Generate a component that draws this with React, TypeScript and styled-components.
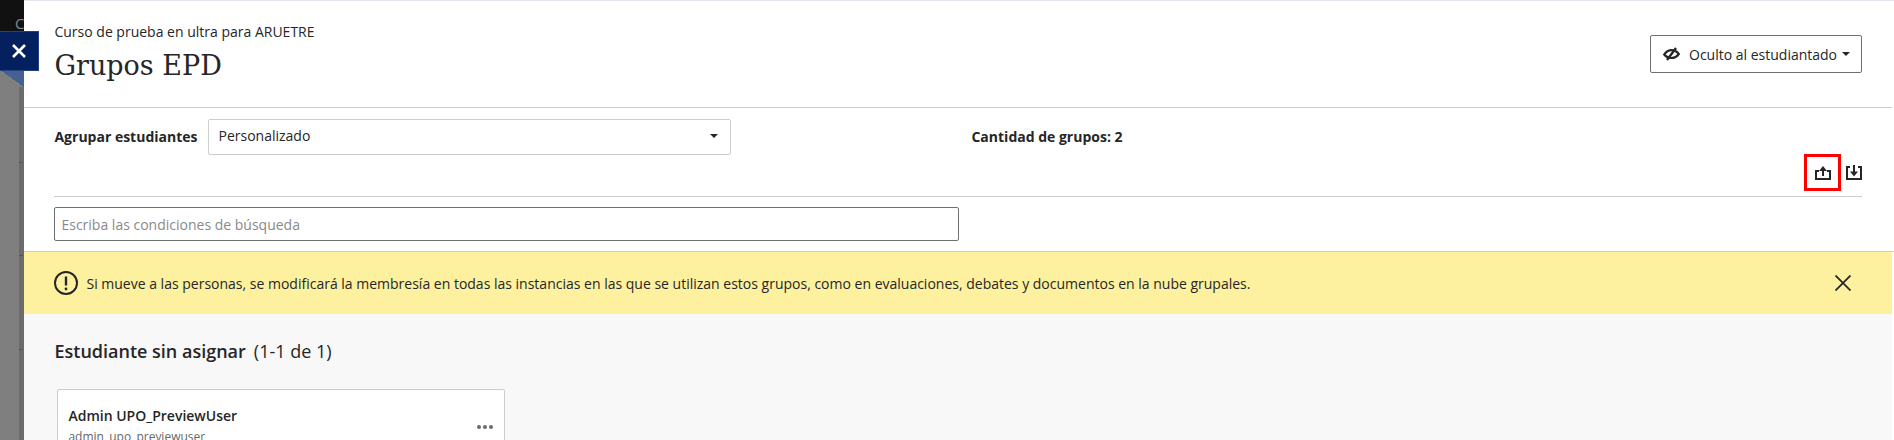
import React from "react";
import styled, { createGlobalStyle } from "styled-components";

const Global = createGlobalStyle`
  html, body { margin: 0; padding: 0; height: 440px; overflow: hidden; background: #fff; }
  #root { height: 440px; }
  * { box-sizing: border-box; }
`;
const sans = `"Open Sans", "Noto Sans", sans-serif`;

const Page = styled.div`
  display: flex;
  width: 1894px;
  height: 440px;
  overflow: hidden;
  font-family: ${sans};
  color: #262626;
`;
const Rail = styled.div`
  position: relative;
  flex: 0 0 23px;
  display: flex;
  flex-direction: column;
  background: #7f7f7f;
  border-right: 5px solid #6b6b6b;
`;
const RailTop = styled.div`
  flex: 0 0 31px;
  margin-right: -5px;
  background: #111;
  overflow: hidden;
  color: #7d8b90;
  font-size: 15px;
  line-height: 46px;
  padding-left: 15px;
`;
const Corner = styled.div`
  flex: 0 0 39px;
`;
const Fold = styled.div`
  flex: 0 0 17px;
  margin-right: -5px;
  background: linear-gradient(to top right, #7f7f7f 50%, #46608f 50%);
`;
const Tick = styled.i<{ $top: number }>`
  position: absolute;
  left: 19px;
  top: ${(p) => p.$top}px;
  width: 4px;
  height: 1px;
  background: #555;
`;
const CloseTab = styled.button`
  position: absolute;
  left: 0;
  top: 31px;
  width: 39px;
  height: 40px;
  padding: 0;
  background: #04205f;
  border: 1px solid #21427f;
  border-left: 0;
  display: flex;
  align-items: center;
  justify-content: center;
  z-index: 2;
`;
const Panel = styled.main`
  flex: 1;
  min-width: 0;
  display: flex;
  flex-direction: column;
  background: #fff;
  border-top: 1px solid #e3e7f1;
`;
const Header = styled.header`
  flex: 0 0 107px;
  margin-right: 2px;
  padding: 0 30px 0 30px;
  display: flex;
  justify-content: space-between;
  border-bottom: 1px solid #cdcdcd;
`;
const Titles = styled.div`
  padding-top: 21px;
`;
const Kicker = styled.div`
  font-size: 14px;
  line-height: 19px;
`;
const Title = styled.h1`
  margin: 7px 0 0;
  font-family: "DejaVu Serif", serif;
  font-weight: 400;
  font-size: 27px;
  line-height: 36px;
`;
const VisibilityButton = styled.button`
  align-self: flex-start;
  margin-top: 34px;
  width: 212px;
  height: 38px;
  padding: 0 0 0 12px;
  display: flex;
  align-items: center;
  gap: 9px;
  background: #fff;
  border: 1px solid #6f6f6f;
  border-radius: 2px;
  font-family: ${sans};
  font-size: 14px;
  color: #262626;
`;
const Caret = styled.span`
  width: 0;
  height: 0;
  border-left: 4px solid transparent;
  border-right: 4px solid transparent;
  border-top: 4px solid #262626;
`;
const ButtonCaret = styled(Caret)`
  margin-left: -4px;
`;
const Controls = styled.section`
  flex: 0 0 89px;
  margin: 0 32px 0 30px;
  border-bottom: 1px solid #cdcdcd;
  display: flex;
  flex-direction: column;
  padding-top: 11px;
`;
const ControlRow = styled.div`
  display: flex;
  align-items: flex-start;
`;
const GroupLabel = styled.label`
  font-size: 14px;
  font-weight: 700;
  line-height: 19px;
  width: 154px;
  padding-top: 8px;
`;
const Select = styled.div`
  width: 523px;
  height: 36px;
  padding: 0 12px 3px 9px;
  display: flex;
  align-items: center;
  justify-content: space-between;
  border: 1px solid #cdcdcd;
  border-radius: 2px;
  font-size: 14px;
  line-height: 19px;
`;
const Count = styled.div`
  margin-left: 240px;
  padding-top: 8px;
  font-size: 14px;
  font-weight: 700;
  line-height: 19px;
`;
const ActionRow = styled.div`
  display: flex;
  justify-content: flex-end;
  align-items: center;
  margin-top: -1px;
  gap: 5px;
`;
const ActionButton = styled.button<{ $marked?: boolean }>`
  width: ${(p) => (p.$marked ? "37px" : "16px")};
  height: 37px;
  padding: 0;
  display: flex;
  align-items: center;
  justify-content: center;
  background: transparent;
  border: ${(p) => (p.$marked ? "3px solid #f00" : "0")};
`;
const SearchRow = styled.div`
  flex: 0 0 55px;
  padding: 10px 0 0 30px;
  border-bottom: 1px solid #cdcdcd;
`;
const Search = styled.input`
  display: block;
  width: 905px;
  height: 34px;
  padding: 0 6px;
  border: 1px solid #6f6f6f;
  border-radius: 2px;
  font-family: ${sans};
  font-size: 14px;
  &::placeholder { color: #8a8a8a; opacity: 1; }
`;
const Notice = styled.div`
  flex: 0 0 62px;
  margin-right: 2px;
  padding: 0 39px 0 30px;
  background: #fdf1a0;
  display: flex;
  align-items: center;
  font-size: 14px;
  gap: 8px;
`;
const NoticeText = styled.span`
  flex: 1;
`;
const DismissButton = styled.button`
  width: 20px;
  height: 20px;
  padding: 0;
  background: transparent;
  border: 0;
  display: flex;
  align-items: center;
  justify-content: center;
`;
const Body = styled.section`
  flex: 1;
  min-height: 0;
  overflow: hidden;
  margin-right: 2px;
  background: #f8f8f8;
  padding: 25px 30px 0;
`;
const SectionTitle = styled.h2`
  margin: 0;
  display: flex;
  gap: 8px;
  font-size: 18px;
  font-weight: 600;
  line-height: 24px;
`;
const SectionCount = styled.span`
  font-weight: 400;
`;
const Card = styled.article`
  position: relative;
  margin: 26px 0 0 3px;
  width: 448px;
  height: 80px;
  padding: 16px 10px 0;
  background: #fff;
  border: 1px solid #cdcdcd;
  border-radius: 2px;
`;
const CardName = styled.div`
  font-size: 14px;
  font-weight: 600;
  line-height: 19px;
`;
const CardSub = styled.div`
  font-size: 12px;
  line-height: 16px;
  color: #666;
  margin-top: 4px;
`;
const More = styled.span`
  position: absolute;
  right: 11px;
  top: 35px;
  display: flex;
  gap: 2px;
`;
const Dot = styled.i`
  width: 4px;
  height: 4px;
  border-radius: 50%;
  background: #6b6b6b;
`;

export default function App() {
  return (
    <Page>
      <Global />
      <Rail>
        <RailTop>C</RailTop>
        <Corner />
        <Fold />
        <Tick $top={162} />
        <Tick $top={255} />
        <Tick $top={349} />
        <CloseTab aria-label="Cerrar">
          <svg width="16" height="16" viewBox="0 0 16 16">
            <path d="M2 2l12 12M14 2L2 14" stroke="#fff" strokeWidth="2.6" />
          </svg>
        </CloseTab>
      </Rail>
      <Panel>
        <Header>
          <Titles>
            <Kicker>Curso de prueba en ultra para ARUETRE</Kicker>
            <Title>Grupos EPD</Title>
          </Titles>
          <VisibilityButton>
            <svg width="17" height="14" viewBox="0 0 17 14" fill="none" stroke="#262626" strokeWidth="2.200">
              <path d="M1.200 7.500c2-3 4.300-4.300 7.300-4.300s5.300 1.300 7.300 3.800c-2 2.800-4.300 4-7.300 4s-5.300-1-7.300-3.500z" />
              <path d="M13 1L4 13" strokeWidth="2.400" />
            </svg>
            Oculto al estudiantado
            <ButtonCaret />
          </VisibilityButton>
        </Header>
        <Controls>
          <ControlRow>
            <GroupLabel>Agrupar estudiantes</GroupLabel>
            <Select>
              Personalizado
              <Caret />
            </Select>
            <Count>Cantidad de grupos: 2</Count>
          </ControlRow>
          <ActionRow>
            <ActionButton $marked aria-label="Exportar">
              <svg width="16" height="14" viewBox="0 0 16 14" fill="none" stroke="#262626" strokeWidth="2">
                <path d="M4 5H1v8h14V5h-3" />
                <path d="M8 3v7" />
                <path d="M4 5L8 0l4 5z" fill="#262626" stroke="none" />
              </svg>
            </ActionButton>
            <ActionButton aria-label="Importar">
              <svg width="16" height="15" viewBox="0 0 16 15" fill="none" stroke="#262626" strokeWidth="2">
                <path d="M4 2H1v12h14V2h-3" />
                <path d="M8 0v8" />
                <path d="M4 6.500L8 11.500l4-5z" fill="#262626" stroke="none" />
              </svg>
            </ActionButton>
          </ActionRow>
        </Controls>
        <SearchRow>
          <Search placeholder="Escriba las condiciones de búsqueda" />
        </SearchRow>
        <Notice>
          <svg width="24" height="24" viewBox="0 0 24 24" fill="none" stroke="#262626" strokeWidth="2">
            <circle cx="12" cy="12" r="11" />
            <path d="M12 5.500v9" strokeWidth="2.400" />
            <circle cx="12" cy="18" r="1.400" fill="#262626" stroke="none" />
          </svg>
          <NoticeText>
            Si mueve a las personas, se modificará la membresía en todas las instancias en las que se utilizan estos grupos, como en evaluaciones, debates y documentos en la nube grupales.
          </NoticeText>
          <DismissButton aria-label="Cerrar aviso">
            <svg width="16" height="16" viewBox="0 0 16 16">
              <path d="M0.500 0.500l15 15M15.500 0.500l-15 15" stroke="#262626" strokeWidth="1.800" />
            </svg>
          </DismissButton>
        </Notice>
        <Body>
          <SectionTitle>
            Estudiante sin asignar <SectionCount>(1-1 de 1)</SectionCount>
          </SectionTitle>
          <Card>
            <CardName>Admin UPO_PreviewUser</CardName>
            <CardSub>admin_upo_previewuser</CardSub>
            <More>
              <Dot />
              <Dot />
              <Dot />
            </More>
          </Card>
        </Body>
      </Panel>
    </Page>
  );
}
